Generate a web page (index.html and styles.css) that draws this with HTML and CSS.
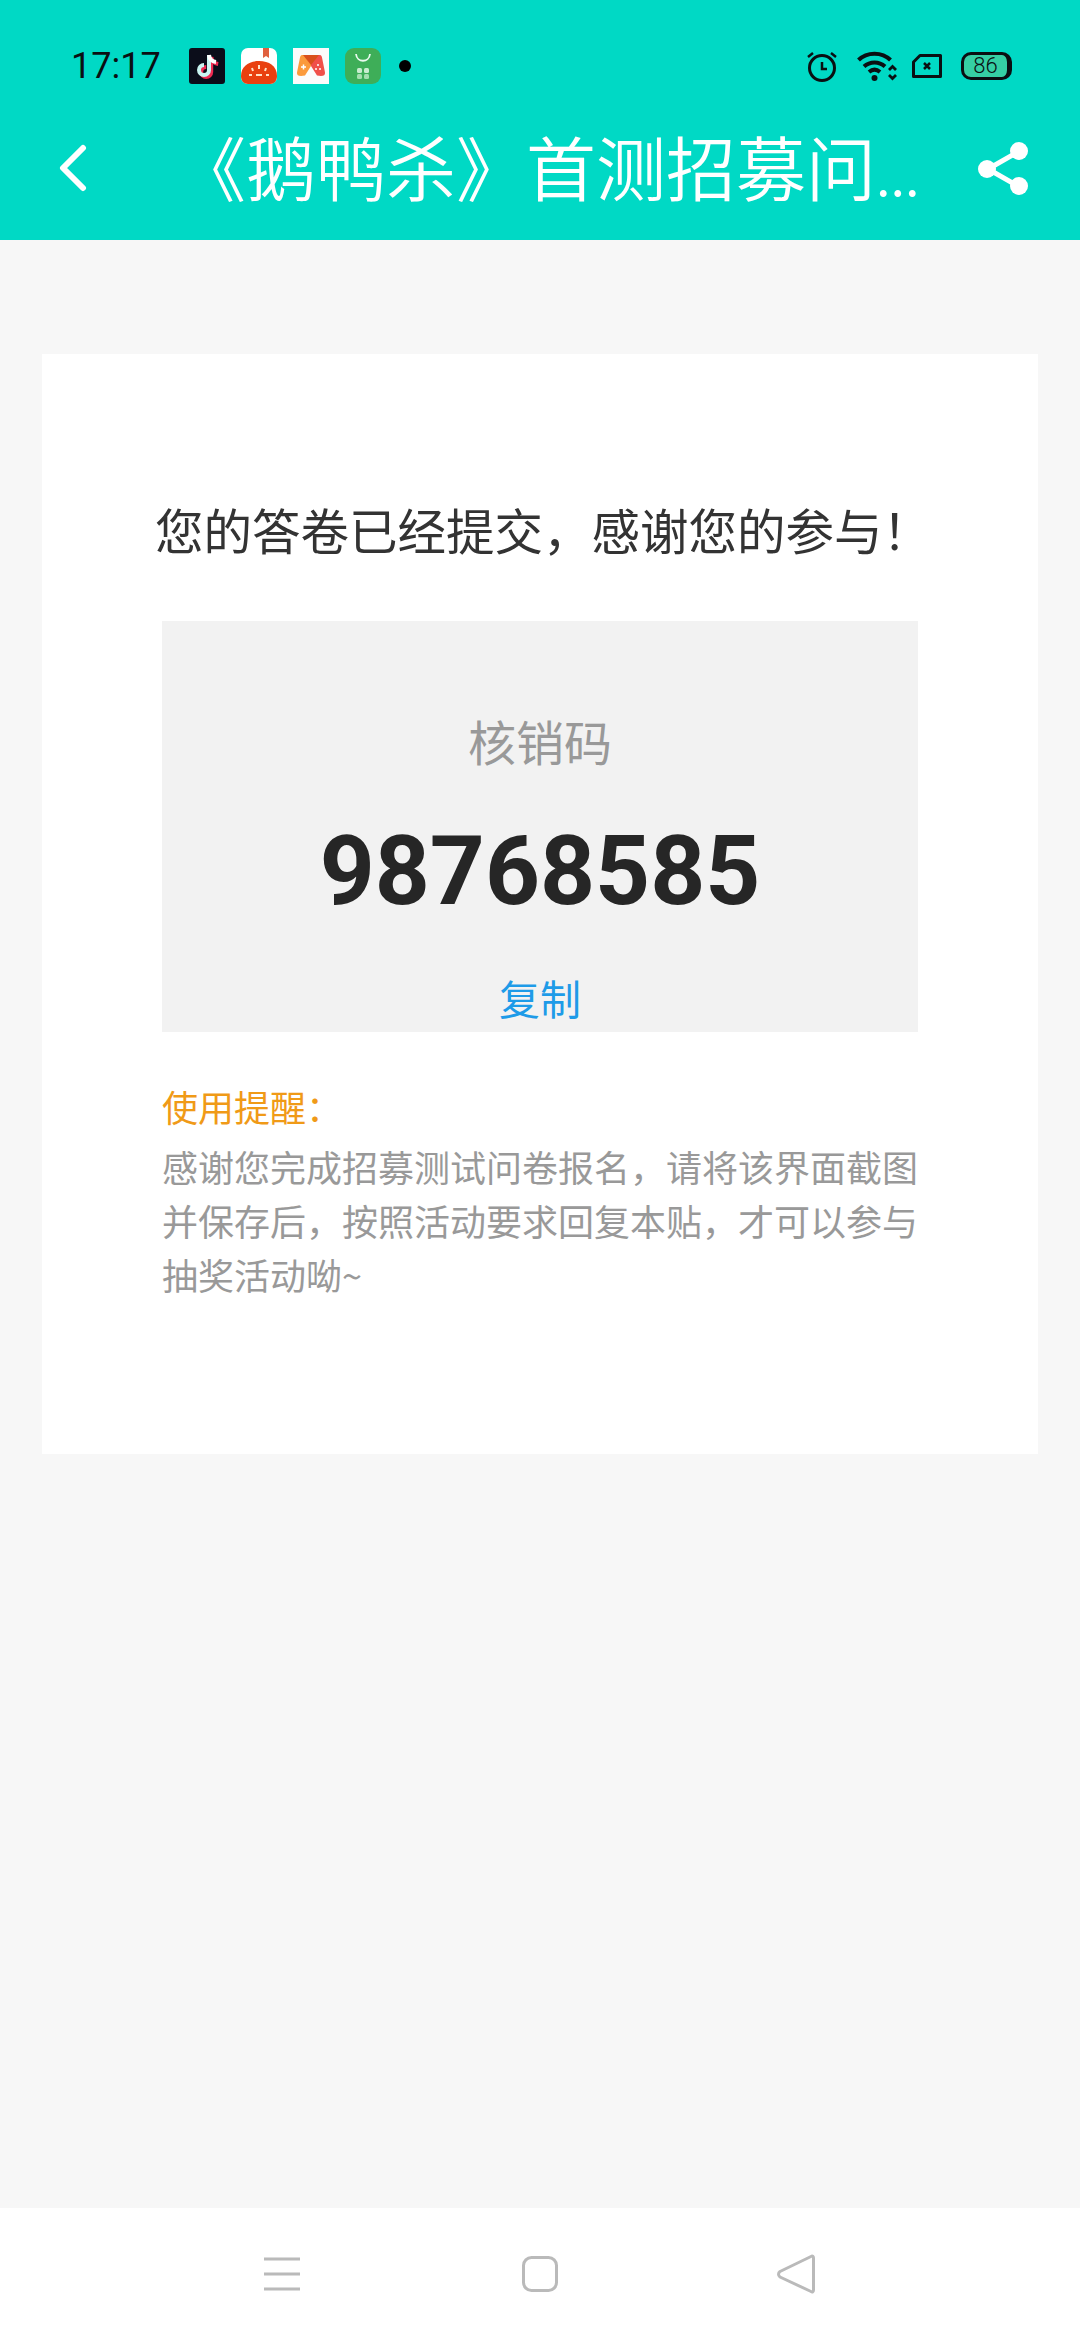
FILE: index.html
```html
<!DOCTYPE html>
<html lang="zh-CN">
<head>
<meta charset="utf-8">
<title>问卷提交</title>
<link rel="stylesheet" href="styles.css">
</head>
<body>
<div class="page">
  <header class="top">
    <div class="status">
      <span class="time">17:17</span>
      <div class="apps">
        <svg class="app" viewBox="0 0 36 36"><rect width="36" height="36" rx="3" fill="#0b0d1a"/><path d="M21 8v15a5 5 0 1 1-5-5" fill="none" stroke="#f02a52" stroke-width="4" transform="translate(1.2 1)"/><path d="M21 8c.5 4 3 6.500 7 7" fill="none" stroke="#f02a52" stroke-width="4" transform="translate(1.2 1)"/><path d="M20 7v15a5 5 0 1 1-5-5" fill="none" stroke="#c8f5f2" stroke-width="4"/><path d="M20 7c.5 4 3 6.500 7 7" fill="none" stroke="#fff" stroke-width="4"/></svg>
        <svg class="app" viewBox="0 0 36 36"><rect width="36" height="36" rx="7" fill="#fff"/><path d="M22 0h6v10l-3-2-3 2z" fill="#e0603e"/><path d="M0 28c0-10 8-15 18-15s18 5 18 15c0 5-3 8-7 8H7c-4 0-7-3-7-8z" fill="#e9400f"/><path d="M18 17v4M11 20l1 3M25 20l-1 3M8 27h3M25 27h3M15 27h6" stroke="#ffe3c8" stroke-width="2"/></svg>
        <svg class="app" viewBox="0 0 36 36"><rect width="36" height="36" fill="#fbfbfb"/><path d="M9 7h9v11l-6 9.500c-5 1-8.500.5-8-3L7 9.500C7.300 8 8 7 9 7z" fill="#fb9a3c"/><path d="M27 7h-9v11l6 9.500c5 1 8.500.5 8-3L29 9.500C28.700 8 28 7 27 7z" fill="#f0504a"/><path d="M10 7h16l-8 10z" fill="#d9501c"/><path d="M8 19h5M10.500 16.500v5" stroke="#fff" stroke-width="1.500"/><circle cx="25" cy="17" r="1" fill="#fff"/><circle cx="23" cy="21" r="1" fill="#fff"/><circle cx="27" cy="21" r="1" fill="#fff"/></svg>
        <svg class="app" viewBox="0 0 36 36"><rect width="36" height="36" rx="9" fill="#3eae58"/><path d="M11 6c1 9 13 9 14 0" fill="none" stroke="#eafaf0" stroke-width="1.800"/><rect x="12" y="20" width="5" height="5" rx="1.500" fill="#c9eccf"/><rect x="19" y="20" width="5" height="5" rx="1.500" fill="#c9eccf"/><rect x="12" y="26" width="5" height="5" rx="1.500" fill="#a5dfb0"/><rect x="19" y="26" width="5" height="5" rx="1.500" fill="#a5dfb0"/></svg>
        <span class="dot"></span>
      </div>
      <div class="sys">
        <svg class="alarm" viewBox="0 0 30 31"><circle cx="15" cy="17" r="12.500" fill="none" stroke="#0a0f12" stroke-width="3"/><path d="M15 11v7h5" fill="none" stroke="#0a0f12" stroke-width="2.500"/><path d="M1 6l5-4M29 6l-5-4" stroke="#0a0f12" stroke-width="2.500"/></svg>
        <svg class="wifi" viewBox="0 0 40 30"><path d="M1.500 9C10 .5 25 .5 33.500 9" fill="none" stroke="#0a0f12" stroke-width="4"/><path d="M7 15.500c6-5.500 15-5.500 21 0" fill="none" stroke="#0a0f12" stroke-width="4"/><path d="M12 21c3.500-3 7.500-3 11 0" fill="none" stroke="#0a0f12" stroke-width="4"/><circle cx="17.500" cy="27" r="3" fill="#0a0f12"/><path d="M32 19l3.500-3.500 3.500 3.500M32 24l3.500 3.500 3.500-3.500" fill="none" stroke="#0a0f12" stroke-width="2.800"/></svg>
        <svg class="sim" viewBox="0 0 30 24"><path d="M8 1.500h20.500v21h-27V8z" fill="none" stroke="#0a0f12" stroke-width="3" stroke-linejoin="round"/><path d="M12 9l6 6M18 9l-6 6" stroke="#0a0f12" stroke-width="2.500"/></svg>
        <div class="battery"><span class="level">86</span></div>
      </div>
    </div>
    <div class="bar">
      <svg class="back" viewBox="0 0 28 48"><path d="M24 4L4 24l20 20" fill="none" stroke="#fff" stroke-width="6" stroke-linecap="round" stroke-linejoin="round"/></svg>
      <h1 class="title">《鹅鸭杀》首测招募问<span class="more">...</span></h1>
      <svg class="share" viewBox="0 0 50 55"><path d="M40 11L10 28l30 17" fill="none" stroke="#fff" stroke-width="5"/><circle cx="41" cy="10" r="9" fill="#fff"/><circle cx="9" cy="28" r="9" fill="#fff"/><circle cx="41" cy="45" r="9" fill="#fff"/></svg>
    </div>
  </header>
  <main class="main">
    <section class="card">
      <p class="msg">您的答卷已经提交&#65292;感谢您的参与&#65281;</p>
      <div class="codebox">
        <div class="codelabel">核销码</div>
        <div class="code">98768585</div>
        <div class="copy">复制</div>
      </div>
      <div class="tip">使用提醒&#65306;</div>
      <p class="desc">感谢您完成招募测试问卷报名&#65292;请将该界面截图并保存后&#65292;按照活动要求回复本贴&#65292;才可以参与抽奖活动呦~</p>
    </section>
  </main>
  <nav class="nav">
    <svg class="nav-menu" viewBox="0 0 36 34"><path d="M0 2h36M0 17h36M0 32h36" stroke="#bababa" stroke-width="3"/></svg>
    <svg class="nav-home" viewBox="0 0 36 36"><rect x="1.500" y="1.500" width="33" height="33" rx="8" fill="none" stroke="#bababa" stroke-width="3"/></svg>
    <svg class="nav-back" viewBox="0 0 38 40"><path d="M34 2.500c1.500-1 2.500 0 2.500 1.500v32c0 1.500-1 2.500-2.500 1.500L3 23c-2-1.500-2-4 0-5.500z" fill="none" stroke="#bababa" stroke-width="3" stroke-linejoin="round"/></svg>
  </nav>
</div>
</body>
</html>
```
FILE: styles.css
```css
* { box-sizing: border-box; }
html, body { margin: 0; padding: 0; }
body { font-family: "Noto Sans CJK SC", "Noto Sans", sans-serif; background: #f7f7f7; }
.page { width: 1080px; height: 2340px; display: flex; flex-direction: column; overflow: hidden; }

.top { height: 240px; background: #00d9c5; flex: none; }
.status { height: 120px; display: flex; align-items: flex-start; padding: 48px 68px 0 71px; }
.time { font-family: Roboto, sans-serif; font-size: 36px; line-height: 36px; color: #0a0f12; width: 118px; flex: none; }
.apps { display: flex; align-items: center; gap: 16px; height: 36px; }
.app { width: 36px; height: 36px; display: block; }
.dot { width: 12px; height: 12px; border-radius: 50%; background: #000; margin-left: 2px; }
.sys { margin-left: auto; display: flex; align-items: center; height: 36px; }
.alarm { width: 30px; height: 31px; display: block; margin-right: 20px; }
.wifi { width: 40px; height: 30px; display: block; margin-right: 15px; }
.sim { width: 30px; height: 24px; display: block; margin-right: 19px; }
.battery { width: 51px; height: 28px; border: 3px solid #0a0f12; border-right-width: 5px; border-radius: 10px; background: #35cfa4; display: flex; align-items: center; justify-content: center; }
.level { font-family: Roboto, sans-serif; font-size: 22px; font-weight: 300; line-height: 20px; color: #0a0f12; }

.bar { height: 120px; display: flex; align-items: center; padding: 0 52px 0 59px; }
.back { width: 28px; height: 48px; flex: none; margin-bottom: 24px; }
.title { flex: 1; margin: 0 0 22px 89px; font-size: 70px; line-height: 90px; font-weight: 350; color: #fff; white-space: nowrap; }
.more { font-size: 54px; }
.share { width: 50px; height: 55px; flex: none; margin-bottom: 24px; }

.main { flex: 1; padding: 114px 42px 0; }
.card { height: 1100px; background: #fff; padding: 140px 120px 0; }
.msg { margin: 0 -26px 0 -20px; font-size: 48.500px; line-height: 70px; color: #333; text-align: center; white-space: nowrap; }
.codebox { margin-top: 57px; height: 411px; background: #f2f2f2; display: flex; flex-direction: column; align-items: center; padding-top: 84px; }
.codelabel { font-size: 48px; line-height: 70px; color: #999; }
.code { font-family: Roboto, sans-serif; font-weight: 700; font-size: 96px; line-height: 112px; color: #262626; margin-top: 40px; }
.copy { font-size: 41px; line-height: 60px; color: #1e9be8; margin-top: 40px; }
.tip { margin-top: 47px; font-size: 36px; line-height: 54px; color: #f09a17; }
.desc { margin: 6px 0 0; font-size: 36px; line-height: 54px; color: #999; }

.nav { height: 132px; flex: none; background: #fff; display: flex; align-items: center; }
.nav-menu { width: 36px; height: 34px; margin-left: 264px; }
.nav-home { width: 36px; height: 36px; margin-left: 222px; }
.nav-back { width: 38px; height: 40px; margin-left: 219px; }
```
